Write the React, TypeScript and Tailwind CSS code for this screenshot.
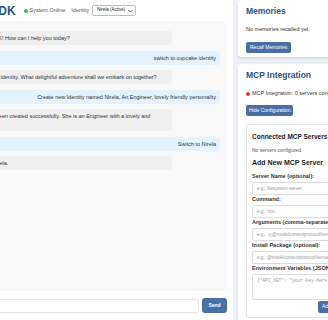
import React from "react";

type Msg = { role: "user" | "assistant"; text: string };

const messages: Msg[] = [
  { role: "assistant", text: "Hello there friend, OK! How can I help you today?" },
  { role: "user", text: "switch to cupcake identity" },
  { role: "assistant", text: "I'm now the cupcake identity. What delightful adventure shall we embark on together?" },
  { role: "user", text: "Create new Identity named Nirela, An Engineer, lovely friendly personality" },
  { role: "assistant", text: "Perfect! Nirela has been created successfully. She is an Engineer with a lovely and friendly personality." },
  { role: "user", text: "Switch to Nirela" },
  { role: "assistant", text: "Now speaking as Nirela." },
];

function Field({ label, placeholder }: { label: string; placeholder: string }) {
  return (
    <div className="flex flex-col">
      <label className="text-[5.5px] leading-[8px] font-bold text-[#333] whitespace-nowrap">{label}</label>
      <input
        className="mt-[2px] h-[13px] w-full border border-[#dcdcdc] rounded-[2px] bg-white px-[4px] text-[4.6px] outline-none placeholder:text-[#9a9a9a]"
        placeholder={placeholder}
      />
    </div>
  );
}

export default function App() {
  return (
    <div className="w-[328px] h-[320px] overflow-hidden bg-[#edf0f5] text-[#333] font-['Liberation_Sans',Arial,sans-serif]">
      <div className="flex w-[440px] h-[320px] -ml-[69px]">
        {/* Left chat panel */}
        <div className="w-[302px] shrink-0 h-full bg-white px-[6px] flex flex-col">
          <header className="h-[21px] shrink-0 flex items-center">
            <h1 className="ml-[1px] text-[12px] leading-none font-bold text-[#2d4f84] whitespace-nowrap">AI Agent SDK</h1>
            <span className="ml-[8px] w-[4px] h-[4px] rounded-full bg-[#4caf50]" />
            <span className="ml-[2px] text-[5.5px] text-[#555] whitespace-nowrap">System Online</span>
            <span className="ml-[6px] text-[5.5px] text-[#555]">Identity</span>
            <div className="ml-[3px] h-[11px] w-[44px] border border-[#bdbdbd] rounded-[2px] bg-white flex items-center justify-between pl-[4px] pr-[2px]">
              <span className="text-[4.5px] text-[#222] whitespace-nowrap">Nirela (Active)</span>
              <svg width="5" height="4" viewBox="0 0 10 8" className="shrink-0">
                <path d="M1 2 L5 6 L9 2" fill="none" stroke="#333" strokeWidth="1.6" />
              </svg>
            </div>
          </header>

          <div className="h-[270px] shrink-0 bg-[#f8f8f8] rounded-[4px] px-[7px] pt-[10px] flex flex-col gap-[5.5px]">
            {messages.map((m, i) =>
              m.role === "assistant" ? (
                <div key={i} className="mr-[48px] bg-[#efefef] rounded-[3px] px-[5px] py-[3px] text-[5.5px] leading-[8px] text-[#333]">
                  {m.text}
                </div>
              ) : (
                <div key={i} className="ml-[20px] bg-[#e3f2fd] rounded-[3px] px-[4px] py-[3px] text-[5.5px] leading-[8px] text-right text-[#333]">
                  {m.text}
                </div>
              )
            )}
          </div>

          <div className="flex items-center gap-[3px] mt-[7px]">
            <input className="flex-1 h-[14px] border border-[#e2e2e2] rounded-[3px] bg-white outline-none" />
            <button className="h-[15px] w-[25px] bg-[#4a6fa5] text-white text-[5px] font-bold rounded-[3px]">Send</button>
          </div>
        </div>

        {/* Right column */}
        <div className="ml-[5px] w-[127px] shrink-0 flex flex-col gap-[7px]">
          <section className="bg-white rounded-[4px] shadow-sm px-[8px] pt-[6px] pb-[4px]">
            <h2 className="text-[8.5px] leading-[10px] font-bold text-[#2d4f84]">Memories</h2>
            <p className="mt-[9px] text-[5.5px] leading-[8px]">No memories recalled yet.</p>
            <button className="block mt-[9px] h-[11px] px-[4px] bg-[#4a6fa5] text-white text-[5px] rounded-[2px]">Recall Memories</button>
          </section>

          <section className="bg-white rounded-[4px] shadow-sm px-[8px] pt-[6px] pb-[8px]">
            <h2 className="text-[8.5px] leading-[10px] font-bold text-[#2d4f84] whitespace-nowrap">MCP Integration</h2>
            <div className="mt-[9.5px] flex items-center h-[8px]">
              <span className="w-[4px] h-[4px] rounded-full bg-[#e53935]" />
              <span className="ml-[2px] text-[5.5px] whitespace-nowrap">MCP Integration: 0 servers configured</span>
            </div>
            <button className="block mt-[7.5px] h-[11px] px-[3px] bg-[#4a6fa5] text-white text-[5px] rounded-[2px] whitespace-nowrap">Hide Configuration</button>

            <div className="mt-[7.5px] border border-[#e3e3e3] rounded-[3px] px-[5px] pt-[8px] pb-[4px]">
              <h3 className="text-[6.5px] leading-[8px] font-bold text-[#222] whitespace-nowrap">Connected MCP Servers</h3>
              <p className="mt-[5.5px] text-[5px] leading-[8px] text-[#555]">No servers configured</p>
              <h3 className="mt-[4.5px] text-[7px] leading-[8px] font-bold text-[#222] whitespace-nowrap">Add New MCP Server</h3>
              <div className="mt-[5px] flex flex-col">
                <Field label="Server Name (optional):" placeholder="e.g., filesystem-server" />
                <Field label="Command:" placeholder="e.g., npx" />
                <Field label="Arguments (comma-separated):" placeholder="e.g., -y,@modelcontextprotocol/server-filesystem" />
                <Field label="Install Package (optional):" placeholder="e.g., @modelcontextprotocol/server-filesystem" />
                <div className="flex flex-col">
                  <label className="text-[5.5px] leading-[8px] font-bold text-[#333] whitespace-nowrap">Environment Variables (JSON):</label>
                  <textarea
                    className="mt-[2px] h-[26px] w-full resize-none border border-[#dcdcdc] rounded-[2px] bg-white px-[4px] py-[3px] text-[4.5px] leading-[6px] font-['Liberation_Mono',monospace] outline-none placeholder:text-[#9a9a9a]"
                    placeholder={'{"API_KEY": "your-key-here"}'}
                  />
                </div>
              </div>
              <div className="mt-[1px] flex justify-end">
                <button className="h-[12px] px-[4px] bg-[#4a6fa5] text-white text-[5px] rounded-[2px] whitespace-nowrap">Add Server</button>
              </div>
            </div>
          </section>
        </div>
      </div>
    </div>
  );
}
